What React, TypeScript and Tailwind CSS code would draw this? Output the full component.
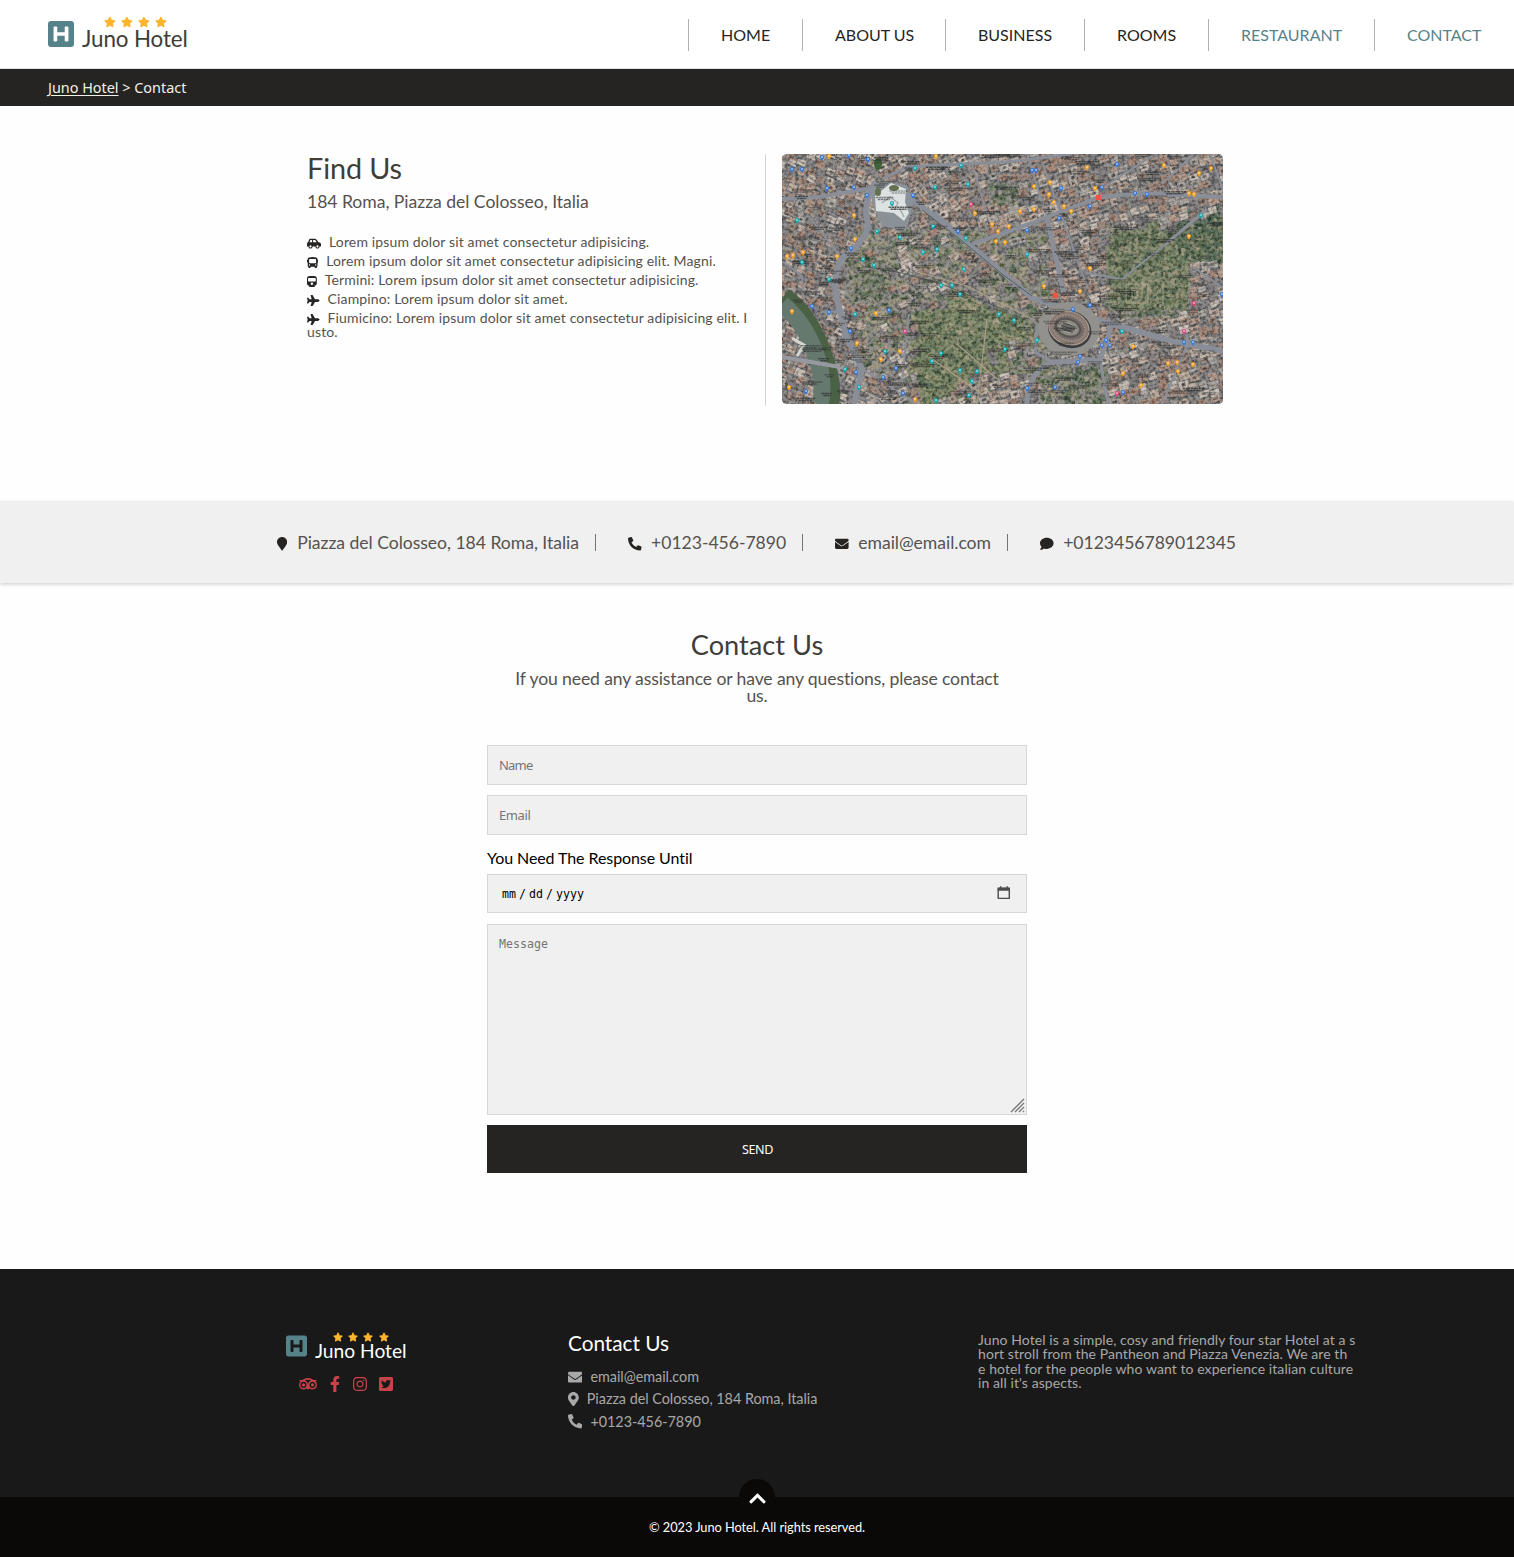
import React from "react";
import {
  FaBus,
  FaCarSide,
  FaChevronUp,
  FaComment,
  FaEnvelope,
  FaFacebookF,
  FaHSquare,
  FaInstagram,
  FaMapMarker,
  FaMapMarkerAlt,
  FaPhoneAlt,
  FaPlane,
  FaStar,
  FaTrain,
  FaTripadvisor,
  FaTwitterSquare,
} from "react-icons/fa";

const nav = [
  { label: "HOME", width: "w-[114px]", color: "text-[#252422]" },
  { label: "ABOUT US", width: "w-[143px]", color: "text-[#252422]" },
  { label: "BUSINESS", width: "w-[139px]", color: "text-[#252422]" },
  { label: "ROOMS", width: "w-[124px]", color: "text-[#252422]" },
  { label: "RESTAURANT", width: "w-[166px]", color: "text-[#56838a]" },
  { label: "CONTACT", width: "w-[140px]", color: "text-[#56838a]" },
];

const directions = [
  { Icon: FaCarSide, size: "w-[14px]", text: "Lorem ipsum dolor sit amet consectetur adipisicing." },
  { Icon: FaBus, size: "w-[11.2px]", text: "Lorem ipsum dolor sit amet consectetur adipisicing elit. Magni." },
  { Icon: FaTrain, size: "w-[9.8px]", text: "Termini: Lorem ipsum dolor sit amet consectetur adipisicing." },
  { Icon: FaPlane, size: "w-[12.6px]", text: "Ciampino: Lorem ipsum dolor sit amet." },
  { Icon: FaPlane, size: "w-[12.6px]", text: "Fiumicino: Lorem ipsum dolor sit amet consectetur adipisicing elit. Iusto." },
];

function random(seed: number) {
  let s = seed;
  return () => {
    s = (s * 1664525 + 1013904223) % 4294967296;
    return s / 4294967296;
  };
}

const roofs = ["#ad8f7e", "#94796b", "#b9a595", "#7c7674", "#a19b95", "#c3b7ab", "#777375", "#9b7968"];
const trees = ["#3b5039", "#4a5f41", "#60704b", "#344a34", "#74785a"];

function inPark(x: number, y: number) {
  return (
    (x > 58 && x < 100 && y > 95 && y < 145) ||
    (x > 322 && x < 400 && y > 95 && y < 158) ||
    (x > 388 && y > 62 && y < 108) ||
    (x > 325 && x < 388 && y > 70 && y < 95) ||
    (x > 255 && x < 320 && y > 212) ||
    (x > 130 && x < 235 && y > 155 && x + y < 400) ||
    (x > 200 && x < 228 && y > 30 && y < 50)
  );
}

function buildBlocks() {
  const r = random(73);
  const out: React.ReactElement[] = [];
  for (let y = -4; y < 254; y += 8) {
    for (let x = -5; x < 446; x += 10) {
      const cx = x + r() * 3;
      const cy = y + r() * 3;
      const angle = cx > 190 ? -20 + r() * 4 : cx < 90 ? 22 + r() * 4 : -32 + r() * 5;
      const park = inPark(cx, cy);
      const ruins = cx > 70 && cx < 260 && cy > 75 && cy < 215;
      if (park || (ruins && r() < 0.6)) {
        for (let k = 0; k < 4; k++) {
          out.push(
            <ellipse
              key={`t${x}-${y}-${k}`}
              cx={cx + r() * 9}
              cy={cy + r() * 7}
              rx={1.5 + r() * 3}
              ry={1 + r() * 2.4}
              fill={r() < (park ? 0.2 : 0.5) ? "#989072" : trees[Math.floor(r() * 5)]}
              opacity={0.45 + r() * 0.45}
            />,
          );
        }
      } else {
        const w = 7 + r() * 4;
        const h = 5 + r() * 3;
        out.push(
          <g key={`b${x}-${y}`} transform={`translate(${cx} ${cy}) rotate(${angle})`}>
            <rect x="-1" y="1" width={w} height={h + 1} fill="#5b5d62" />
            <rect width={w} height={h} fill={roofs[Math.floor(r() * 8)]} />
            <path d={`M0 ${h / 2}H${w}`} stroke="#5c514b" strokeWidth=".5" opacity=".7" />
            {r() < 0.4 && <rect x={w * 0.3} y={h * 0.25} width={w * 0.38} height={h * 0.4} fill="#55534f" />}
          </g>,
        );
      }
    }
  }
  return out;
}

function buildLabels() {
  const r = random(411);
  const out: React.ReactElement[] = [];
  for (let i = 0; i < 220; i++) {
    const x = r() * 430;
    const y = r() * 248;
    const w = 8 + r() * 18;
    out.push(
      <path key={i} d={`M${x} ${y}h${w}M${x + 2} ${y + 2}h${w * 0.7}`} stroke="#2c2e2d" strokeWidth="1.5" strokeDasharray="2.4 .5 3 .4 1.4 .5" opacity={0.35 + r() * 0.4} />,
    );
  }
  return out;
}

const orangePins = [[47,3],[154,3],[305,14],[382,12],[429,15],[417,20],[252,33],[268,29],[313,35],[267,41],[272,49],[282,53],[289,58],[252,56],[238,58],[193,60],[210,71],[227,73],[216,78],[214,88],[223,89],[72,62],[73,86],[55,103],[21,99],[11,102],[5,103],[407,83],[407,40],[412,41],[308,115],[262,133],[298,138],[94,160],[10,158],[75,190],[118,198],[99,206],[7,234],[133,246],[351,193],[386,210],[395,209],[396,218],[411,211],[341,220],[359,232]];
const tealPins = [[133,15],[179,12],[153,34],[186,31],[110,50],[15,67],[95,78],[118,84],[151,73],[184,85],[155,96],[141,99],[81,106],[92,112],[47,126],[20,109],[245,101],[182,116],[159,132],[170,132],[178,141],[217,161],[232,167],[73,161],[103,198],[159,200],[150,208],[63,216],[178,217],[195,218],[190,228],[187,242],[77,234],[255,187],[223,196],[340,178],[419,62],[154,247]];
const bluePins = [[10,16],[20,16],[40,4],[67,2],[45,35],[72,34],[86,6],[85,42],[131,42],[176,78],[69,95],[254,17],[279,35],[320,34],[308,53],[277,65],[245,77],[335,11],[353,40],[365,41],[107,157],[30,153],[47,159],[68,178],[74,219],[114,215],[101,224],[24,238],[121,240],[291,156],[328,192],[320,192],[298,203],[296,209],[245,235],[273,234],[324,187],[402,189],[411,189],[341,239],[250,17],[308,152],[440,141]];
const pinkPins = [[189,51],[123,178],[412,150],[402,178],[335,240]];

function Pins({ points, color }: { points: number[][]; color: string }) {
  return (
    <g>
      {points.map(([x, y], i) => (
        <g key={i}>
          <path d={`M${x - 2.1} ${y - 1}a2.1 2.1 0 1 1 4.2 0q0 1.6-2.1 3.8q-2.1-2.2-2.1-3.8z`} fill={color} />
          <rect x={x - 0.6} y={y - 1.7} width="1.2" height="1.4" fill="#fff" />
        </g>
      ))}
    </g>
  );
}

function SatelliteMap() {
  return (
    <svg viewBox="0 0 441 250" className="block h-[250px] w-[441px] rounded-[5px]" fill="none" role="img" aria-label="Map of Rome">
      <defs>
        <filter id="grain" x="0" y="0" width="100%" height="100%">
          <feTurbulence type="fractalNoise" baseFrequency="0.3" numOctaves="4" seed="8" />
          <feColorMatrix values="3 0 0 0 -1.1  3 0 0 0 -1.1  3 0 0 0 -1.1  0 0 0 0 .2" />
        </filter>
      </defs>
      <rect width="441" height="250" fill="#7f7d77" />
      <path d="M130 160L180 140L240 165L245 180L200 250H125z" fill="#737d59" />
      <path d="M318 95L340 70L388 66L412 85L405 155L320 158z" fill="#727b5a" />
      <path d="M390 60L441 45V115L398 105z" fill="#465c45" />
      {buildBlocks()}
      <rect width="441" height="250" filter="url(#grain)" />
      <path d="M0 145Q22 160 36 195T45 250" stroke="#4b6145" strokeWidth="24" />
      <path d="M0 150Q22 168 33 198T38 250" stroke="#66796f" strokeWidth="17" />
      <path d="M0 203L58 213" stroke="#9699a0" strokeWidth="4" />
      <path d="M10 184L22 191L15 202" stroke="#d2d8cf" strokeWidth="3" />

      <g stroke="#8a8e98" strokeLinejoin="round">
        <path d="M126 43L150 60L185 89L225 122L250 144L290 157L330 170L390 187L441 197" strokeWidth="5.5" />
        <path d="M94 28Q80 47 86 70Q84 88 59 105Q50 125 55 145L64 182L80 215L72 250" strokeWidth="6" />
        <path d="M0 45L38 43L88 34" strokeWidth="4" />
        <path d="M190 90L250 69L314 44L355 39L441 43" strokeWidth="4" />
        <path d="M100 25L125 13L180 10L225 8L290 0" strokeWidth="3" />
        <path d="M265 64L282 140" strokeWidth="5" />
        <path d="M330 170L318 206L270 208Q247 216 245 250" strokeWidth="5" />
        <path d="M425 55L385 89" strokeWidth="3" />
        <path d="M305 132L260 8M245 0L265 64M428 0L441 36M385 89L340 125L305 119" strokeWidth="2" />
        <path d="M318 206L326 250M270 208L253 198L255 170" strokeWidth="3" />
        <path d="M80 215L135 250M127 160L120 228" strokeWidth="2" />
        <path d="M380 250L407 187L404 180" strokeWidth="2" />
        <path d="M410 112L441 134M0 107L20 122L22 147M38 158L62 157" strokeWidth="2" />
        <path d="M380 30L412 0M320 34L370 2M190 10L205 60M60 105L25 60M155 60L178 80" strokeWidth="2" />
      </g>
      <g stroke="#4b5553" strokeWidth="1" opacity=".8">
        <path d="M140 56L180 87L220 120L250 142M80 112L120 119L160 130L225 157" />
        <path d="M258 153L325 173M255 183L278 200L303 201" />
      </g>
      <path d="M135 118L185 132L250 165M150 205L200 240M175 190L215 225M205 165L195 250" stroke="#a99f87" strokeWidth="1.2" />

      <path d="M88 35L100 27L125 31L132 48L124 77L100 72L91 52z" fill="#8b9297" />
      <path d="M93 42L109 29L124 35L123 48L127 59L122 67L112 59L94 57z" fill="#dce1e1" />
      <path d="M100 49L108 43L116 49L112 56M118 55L122 63" stroke="#a6abad" strokeWidth="1.5" />
      <ellipse cx="96" cy="38" rx="3" ry="4" fill="#647150" />
      <ellipse cx="112" cy="34" rx="5" ry="3" fill="#647150" />
      <ellipse cx="96" cy="10" rx="4" ry="6" fill="#3f6438" />

      <ellipse cx="287" cy="175" rx="31" ry="27" fill="#93918d" />
      <g transform="rotate(19 287 174)">
        <ellipse cx="288" cy="175" rx="22" ry="18.5" fill="#3c3d40" />
        <ellipse cx="287" cy="174" rx="20.5" ry="16.5" fill="#8b7a70" stroke="#b3a59b" />
        <ellipse cx="287" cy="174" rx="16.5" ry="12.5" fill="#756c69" stroke="#978b84" strokeWidth="2" strokeDasharray="2 1" />
        <ellipse cx="286" cy="174" rx="12.5" ry="8.5" fill="#8d8882" stroke="#565350" strokeWidth="2" />
        <ellipse cx="286" cy="174" rx="8" ry="4.5" fill="#6d6b67" stroke="#aaa196" />
        <path d="M279 171h14M279 174h14M279 177h13" stroke="#4b5050" />
      </g>
      <path d="M344 130h22v19h-22zM350 135h10v8h-10zM366 127h15v25" stroke="#a8a588" />
      {buildLabels()}
      <Pins points={orangePins} color="#efa026" />
      <Pins points={tealPins} color="#16a8b0" />
      <Pins points={bluePins} color="#3979d9" />
      <Pins points={pinkPins} color="#e1477e" />
      <g fill="#ee5544">
        <rect x="314" y="41" width="5" height="5" />
        <rect x="271" y="139" width="5" height="5" />
      </g>
    </svg>
  );
}

function Header() {
  return (
    <header className="flex h-[69px] justify-between border-b border-[#dedede] bg-white pl-12">
      <div className="flex pt-[19px]">
        <FaHSquare className="h-[30px] w-[26px] text-[#56838a]" />
        <div className="ml-2 flex flex-col">
          <div className="-mt-[3px] ml-[22px] flex gap-[5.2px] text-[#fdb52e]">
            {[0, 1, 2, 3].map((i) => (
              <FaStar key={i} className="h-[12px] w-[11.8px]" />
            ))}
          </div>
          <span className="text-[22.4px] leading-[22px] tracking-[-0.12px] text-[#403d39]">Juno Hotel</span>
        </div>
      </div>
      <nav className="mt-[19px] flex h-8">
        {nav.map((item) => (
          <a key={item.label} className={`${item.width} ${item.color} border-l border-[#b3b1b0] pl-8 text-[16px] leading-8 whitespace-nowrap`}>
            {item.label}
          </a>
        ))}
      </nav>
    </header>
  );
}

function Divider() {
  return <span className="h-[17px] w-px bg-[#77746f]" />;
}

export default function App() {
  return (
    <div className="h-[1557px] w-[1514px] overflow-hidden bg-[#fefefe] font-['Lato',sans-serif] text-[#403d39] [font-variant-ligatures:none]">
      <Header />
      <div className="h-[37px] bg-[#252422] pl-12 font-['Noto_Sans',sans-serif] text-[14.4px] leading-[37px] text-[#f3f1e6]">
        <a className="underline underline-offset-2">Juno Hotel</a> &gt; Contact
      </div>

      <section className="mt-12 ml-[307px] flex h-[252px]">
        <div className="w-[459px] shrink-0 border-r border-[#d4d4d4] pr-4">
          <h1 className="text-[28.8px] leading-[29px] tracking-[-0.1px]">Find Us</h1>
          <p className="mt-[10px] text-[17.6px] leading-[18px] tracking-[-0.04px] text-[#55524e]">184 Roma, Piazza del Colosseo, Italia</p>
          <ul className="mt-[23.8px] text-[14px] leading-[14.3px] tracking-[0.14px] break-all text-[#55524e]">
            {directions.map(({ Icon, size, text }, i) => (
              <li key={i} className="mb-[4.8px]">
                <Icon className={`${size} mr-2 inline-block h-[11.2px] align-[-2px] text-[#252422]`} />
                {text}
              </li>
            ))}
          </ul>
        </div>
        <div className="ml-4 shrink-0">
          <SatelliteMap />
        </div>
      </section>

      <section className="mt-24 flex h-[81px] bg-[#f0f0f0] pl-[277px] text-[17.6px] leading-[81px] tracking-[-0.04px] text-[#55524e] shadow-[0_1px_4px_rgba(0,0,0,0.22)]">
        <div className="flex w-[959px] items-center justify-between whitespace-nowrap">
          <span className="flex items-center">
            <FaMapMarker className="mt-[3px] mr-[10px] h-[13.6px] w-[10.2px] text-[#252422]" />
            Piazza del Colosseo, 184 Roma, Italia
          </span>
          <Divider />
          <span className="flex items-center pl-4">
            <FaPhoneAlt className="mt-[3px] mr-[9.6px] size-[13.6px] text-[#252422]" />
            +0123-456-7890
          </span>
          <Divider />
          <span className="flex items-center pl-4">
            <FaEnvelope className="mt-[3px] mr-[9.6px] size-[13.6px] text-[#252422]" />
            email@email.com
          </span>
          <Divider />
          <span className="flex items-center pl-4">
            <FaComment className="mt-[3px] mr-[9.6px] size-[13.6px] text-[#252422]" />
            +0123456789012345
          </span>
        </div>
      </section>

      <form className="mx-auto mt-[48px] flex h-[638px] w-[540px] flex-col">
        <h2 className="text-center text-[27.2px] leading-[28px]">Contact Us</h2>
        <p className="mt-[11px] px-5 text-center text-[17.6px] leading-[17.4px] tracking-[-0.13px] text-[#55524e]">
          If you need any assistance or have any questions, please contact us.
        </p>
        <input
          placeholder="Name"
          className="mt-[40.4px] h-[40px] shrink-0 border border-[#d6d6d6] bg-[#f0f0f0] px-[11px] font-['Noto_Sans'] text-[13px] tracking-[-0.8px] placeholder:text-[#757575]"
        />
        <input
          placeholder="Email"
          className="mt-[10px] h-[40px] shrink-0 border border-[#d6d6d6] bg-[#f0f0f0] px-[11px] font-['Noto_Sans'] text-[13px] tracking-[-0.4px] placeholder:text-[#757575]"
        />
        <label className="mt-[13px] text-[16px] leading-[19px] tracking-[-0.08px] text-black">You Need The Response Until</label>
        <div className="mt-[7px] flex h-[39px] shrink-0 items-center border border-[#d6d6d6] bg-[#f0f0f0] px-[14px] pt-[2px] font-['DejaVu_Sans_Mono',monospace] text-[11.6px] text-black">
          <span className="w-[17px]">mm</span>
          <span className="w-[10px]">/</span>
          <span className="w-[17px]">dd</span>
          <span className="w-[10px]">/</span>
          <span>yyyy</span>
          <svg viewBox="0 0 14 14" className="mr-[1px] mb-[3px] ml-auto size-[14px]" fill="none">
            <path d="M1.2 2.2h11.1v10.2h-11.1z" stroke="#4d4d4d" strokeWidth="1.4" strokeLinejoin="round" />
            <path d="M.7 1.7h12v3h-12zM3 .2h1.4v2h-1.4zM9.4 .2h1.4v2h-1.4z" fill="#4d4d4d" />
          </svg>
        </div>
        <div className="relative mt-[11px] h-[191px] shrink-0">
          <textarea
            placeholder="Message"
            className="block size-full resize-none border border-[#d6d6d6] bg-[#f0f0f0] px-[11px] py-[12px] font-['DejaVu_Sans_Mono',monospace] text-[11.6px] leading-[14px] placeholder:text-[#757575]"
          />
          <svg viewBox="0 0 15 15" className="absolute right-[2px] bottom-[2px] size-[15px]">
            <path d="M1 14L14 1M5 14L14 5M9 14L14 9M13 14L14 13" stroke="#777" strokeWidth="1.3" />
          </svg>
        </div>
        <button type="button" className="mt-[10px] h-[48px] shrink-0 bg-[#252422] pt-[2px] pl-[1px] font-['Noto_Sans'] text-[12.6px] tracking-[-0.4px] text-white">
          SEND
        </button>
      </form>

      <footer className="flex h-[228px] bg-[#191919] pt-[64px] text-[#a8a8a8]">
        <div className="ml-[286px] w-[282px]">
          <div className="flex text-white">
            <FaHSquare className="mt-[1px] h-[24px] w-[21px] text-[#56838a]" />
            <div className="ml-2 flex flex-col">
              <div className="-mt-[1px] ml-[17.5px] flex gap-[5.4px] text-[#fdb52e]">
                {[0, 1, 2, 3].map((i) => (
                  <FaStar key={i} className="h-[10px] w-[10px]" />
                ))}
              </div>
              <span className="-mt-px text-[19.2px] leading-[19px]">Juno Hotel</span>
            </div>
          </div>
          <div className="mt-[16px] ml-[13px] flex items-center text-[#ca414a]">
            <FaTripadvisor className="h-[16px] w-[18px]" />
            <FaFacebookF className="ml-[13px] h-[16px] w-[10px]" />
            <FaInstagram className="ml-[12px] size-[16px]" />
            <FaTwitterSquare className="ml-[10px] size-[16px]" />
          </div>
        </div>
        <div className="w-[410px] text-[14.4px] tracking-[-0.03px]">
          <h2 className="-mt-px text-[20.8px] leading-[21px] text-white">Contact Us</h2>
          <div className="mt-[12.6px] flex h-[22.4px] items-center">
            <FaEnvelope className="mr-2 size-[14.4px]" />
            email@email.com
          </div>
          <div className="flex h-[22.4px] items-center">
            <FaMapMarkerAlt className="mr-2 h-[14.4px] w-[10.8px]" />
            Piazza del Colosseo, 184 Roma, Italia
          </div>
          <div className="flex h-[22.4px] items-center">
            <FaPhoneAlt className="mr-2 size-[14.4px]" />
            +0123-456-7890
          </div>
        </div>
        <p className="text-[14px] leading-[14.4px] tracking-[0.08px] whitespace-nowrap">
          Juno Hotel is a simple, cosy and friendly four star Hotel at a s<br />
          hort stroll from the Pantheon and Piazza Venezia. We are th<br />
          e hotel for the people who want to experience italian culture<br />
          in all it's aspects.
        </p>
      </footer>
      <div className="flex h-[60px] flex-col items-center bg-[#0a0907] text-white">
        <span className="-mt-[18px] flex size-[36px] items-center justify-center rounded-full bg-[#0a0907]">
          <FaChevronUp className="mt-[2px] h-[19px] w-[17px]" />
        </span>
        <p className="mt-[4px] text-[12.8px] leading-[16px] tracking-[-0.04px]">© 2023 Juno Hotel. All rights reserved.</p>
      </div>
    </div>
  );
}
